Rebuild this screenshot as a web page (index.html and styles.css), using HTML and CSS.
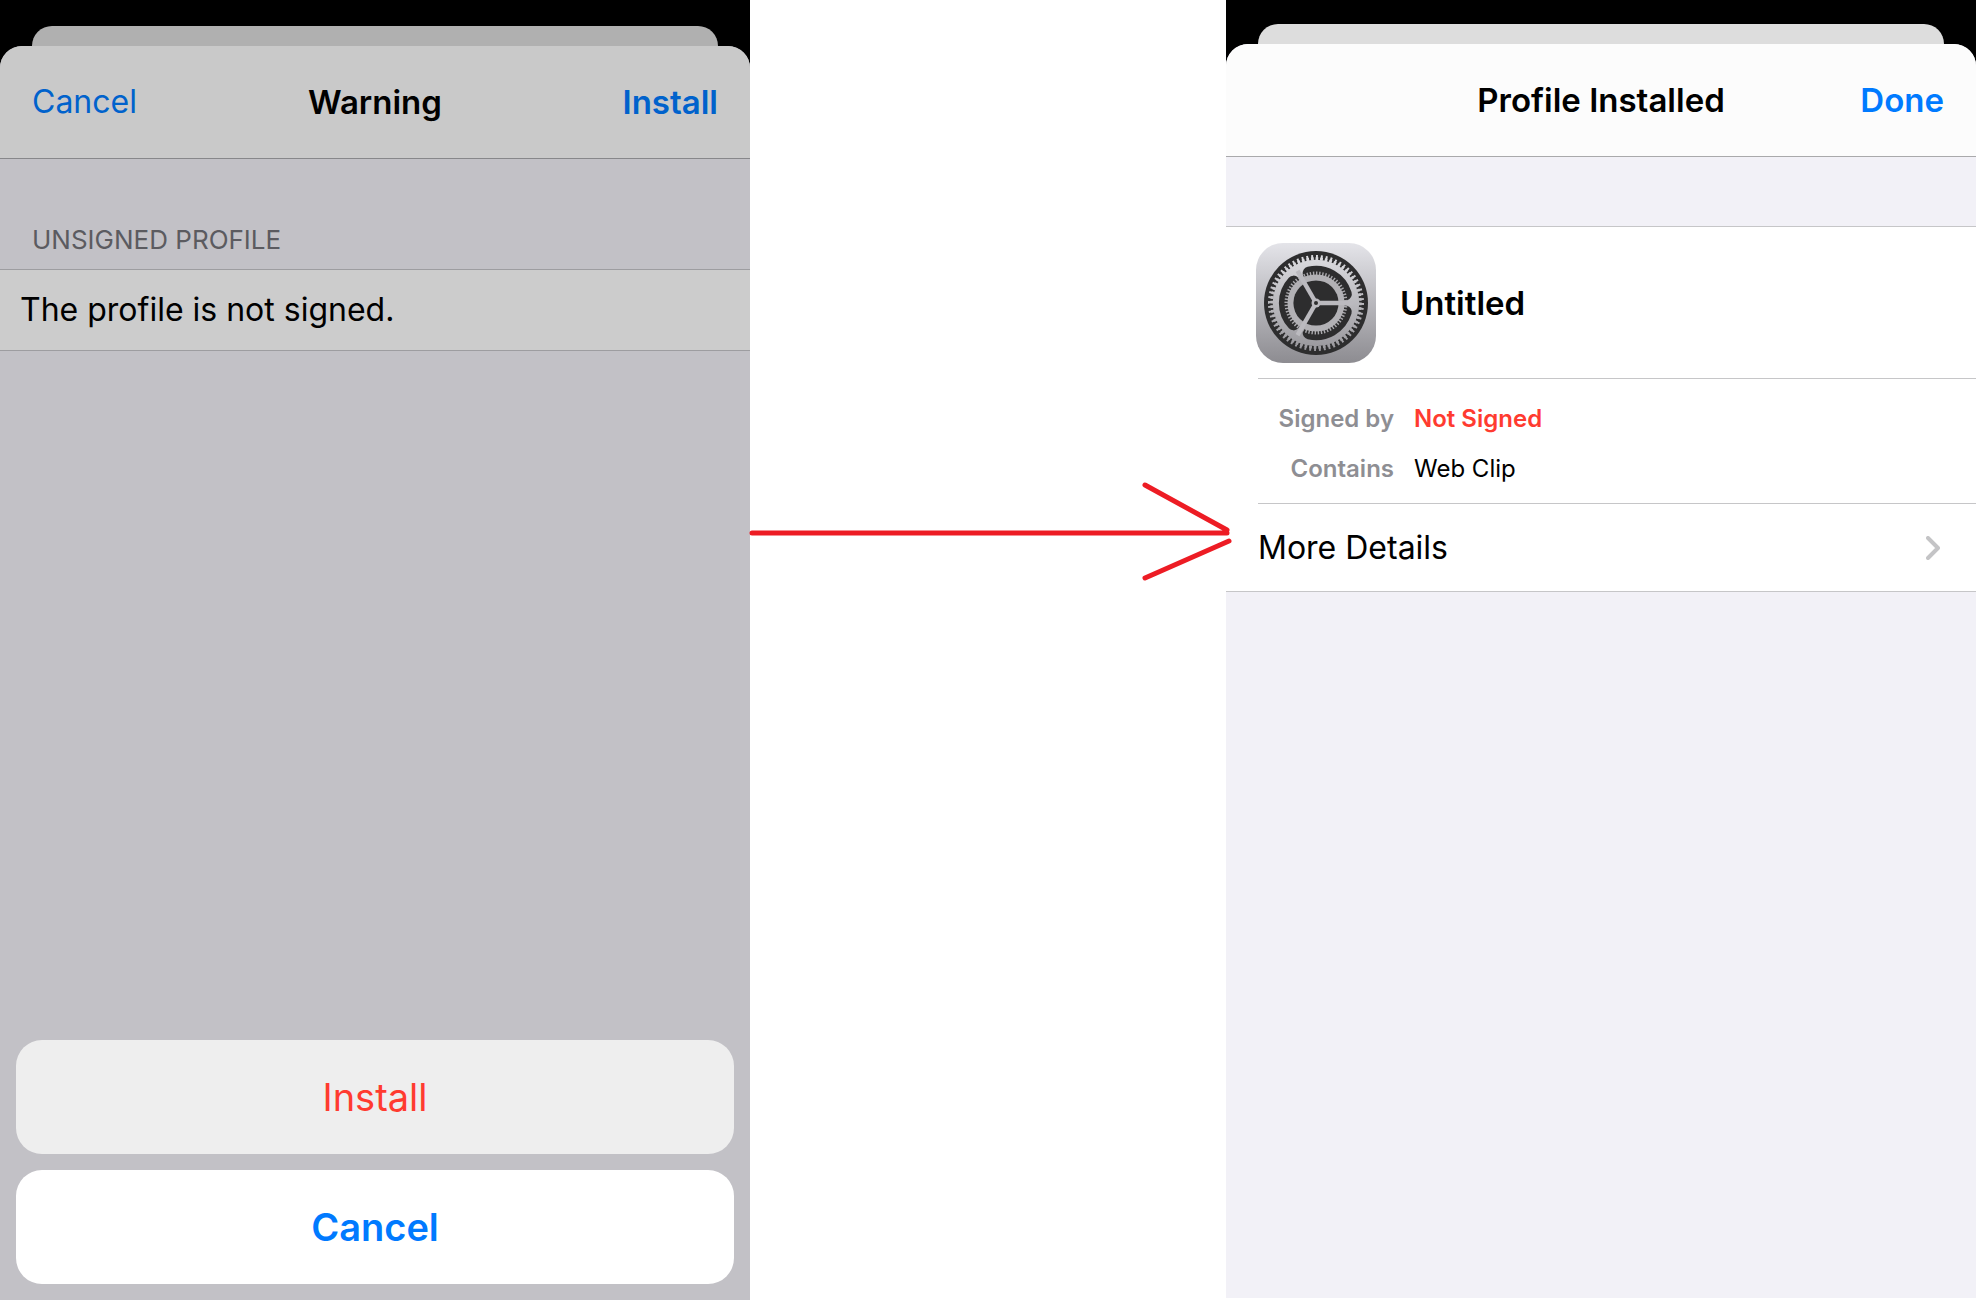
FILE: index.html
```html
<!DOCTYPE html>
<html lang="en">
<head>
    <meta charset="UTF-8">
    <meta name="viewport" content="width=device-width, initial-scale=1.0">
    <title>Install Profile</title>
    <link rel="stylesheet" href="styles.css">
</head>
<body>
    <main class="steps">
        <!-- Step 1: warning -->
        <section class="phone phone-dimmed">
            <div class="back-card"></div>
            <div class="sheet">
                <header class="navbar">
                    <button type="button" class="nav-button nav-left">Cancel</button>
                    <h1>Warning</h1>
                    <button type="button" class="nav-button nav-right strong">Install</button>
                </header>
                <h2 class="section-label">UNSIGNED PROFILE</h2>
                <p class="message">The profile is not signed.</p>
                <div class="action-sheet">
                    <button type="button" class="action destructive">Install</button>
                    <button type="button" class="action cancel">Cancel</button>
                </div>
            </div>
        </section>

        <svg class="arrow" viewBox="0 0 480 100" aria-hidden="true">
            <path d="M2 53H477M395 5L477 50M395 98L479 61"/>
        </svg>

        <!-- Step 2: installed -->
        <section class="phone phone-done">
            <div class="back-card"></div>
            <div class="sheet">
                <header class="navbar">
                    <h1>Profile Installed</h1>
                    <button type="button" class="nav-button nav-right strong">Done</button>
                </header>
                <div class="profile">
                    <div class="profile-head">
                        <svg class="gear" viewBox="0 0 120 120" aria-hidden="true">
                            <defs>
                                <linearGradient id="plate" x1="0" y1="0" x2="0" y2="1">
                                    <stop offset="0" stop-color="#e4e4e9"/>
                                    <stop offset="1" stop-color="#8d8c91"/>
                                </linearGradient>
                                <linearGradient id="metal" gradientUnits="userSpaceOnUse" x1="0" y1="-48" x2="0" y2="48">
                                    <stop offset="0" stop-color="#dcdce0"/>
                                    <stop offset="1" stop-color="#98979c"/>
                                </linearGradient>
                            </defs>
                            <rect width="120" height="120" rx="27" fill="url(#plate)"/>
                            <g transform="translate(60 60)" fill="none">
                                <circle r="52" fill="#2d2d2e"/>
                                <!-- outer wheel -->
                                <circle r="45.5" stroke="url(#metal)" stroke-width="5" pathLength="120" stroke-dasharray="0.8 1.2"/>
                                <circle r="44.2" stroke="url(#metal)" stroke-width="3" pathLength="120" stroke-dasharray="1.2 0.8" stroke-dashoffset="0.2"/>
                                <circle r="43.3" fill="url(#metal)"/>
                                <!-- slots between the spokes -->
                                <g stroke="#2d2d2e" stroke-width="13" stroke-linecap="round">
                                    <path d="M29.3 -9A30.6 30.6 0 0 0 -6.9 -29.8"/>
                                    <path d="M29.3 -9A30.6 30.6 0 0 0 -6.9 -29.8" transform="rotate(-120)"/>
                                    <path d="M29.3 -9A30.6 30.6 0 0 0 -6.9 -29.8" transform="rotate(120)"/>
                                </g>
                                <!-- inner wheel -->
                                <circle r="29.5" stroke="#aaa9ad" stroke-width="4" pathLength="120" stroke-dasharray="0.9 1.1"/>
                                <circle r="25.5" stroke="#b2b1b5" stroke-width="6"/>
                                <circle r="22.6" fill="#2d2d2e"/>
                                <g stroke="#bbbabf" stroke-width="4.4">
                                    <path d="M0 0H37"/>
                                    <path d="M0 0H37" transform="rotate(120)"/>
                                    <path d="M0 0H37" transform="rotate(-120)"/>
                                </g>
                                <circle r="4.5" fill="#bbbabf"/>
                                <circle r="2" fill="#2d2d2e"/>
                            </g>
                        </svg>
                        <h2>Untitled</h2>
                    </div>
                    <dl class="facts">
                        <dt>Signed by</dt>
                        <dd class="not-signed">Not Signed</dd>
                        <dt>Contains</dt>
                        <dd>Web Clip</dd>
                    </dl>
                    <a href="#" class="more">
                        More Details
                        <svg class="chevron" viewBox="0 0 14 24" aria-hidden="true">
                            <path d="M2 2L12 12L2 22"/>
                        </svg>
                    </a>
                </div>
            </div>
        </section>
    </main>
</body>
</html>
```
FILE: styles.css
```css
* {
    box-sizing: border-box;
}

body {
    margin: 0;
    background: #fff;
    color: #000;
    font-family: Inter, Roboto, sans-serif;
    font-size: 32px;
    line-height: 40px;
}

h1, h2, p, dl, dd {
    margin: 0;
}

h1, h2, .strong {
    font-size: 33px;
    font-weight: 600;
}

button {
    border: none;
    padding: 0;
    background: none;
    font: inherit;
    cursor: pointer;
}

.steps {
    display: grid;
    grid-template-columns: 750fr 476fr 750fr;
    min-height: 100vh;
    padding-right: 2px;
}

.phone {
    display: flex;
    flex-direction: column;
    background: #000;
}

.phone-dimmed {
    padding-top: 26px;
}

.phone-done {
    padding-top: 24px;
    margin-bottom: 2px;
}

/* edge of the card behind the sheet */
.back-card {
    height: 20px;
    margin: 0 32px;
    border-radius: 20px 20px 0 0;
    background: #ddd;
}

.sheet {
    flex: 1;
    display: flex;
    flex-direction: column;
    border-radius: 22px 22px 0 0;
    background: #f2f1f7;
    overflow: hidden;
}

.navbar {
    display: grid;
    grid-template-columns: 1fr auto 1fr;
    align-items: center;
    height: 113px;
    padding: 0 32px;
    border-bottom: 1px solid #a9a9ab;
    background: #fcfcfc;
}

.navbar h1 {
    grid-column: 2;
}

.nav-button {
    color: #007aff;
}

.nav-left {
    justify-self: start;
}

.nav-right {
    justify-self: end;
}

/* warning screen */
.phone-dimmed .back-card {
    background: #b0b0b0;
}

.phone-dimmed .sheet {
    background: #c2c1c6;
}

.phone-dimmed .navbar {
    background: #c9c9c9;
    border-color: #87878a;
}

.phone-dimmed .nav-button {
    color: #0062cc;
}

.section-label {
    padding: 61px 32px 9px;
    color: #5b5b60;
    font-size: 26px;
    font-weight: 400;
}

.message {
    padding: 20px;
    border: solid #9d9da0;
    border-width: 1px 0;
    background: #ccc;
}

.action-sheet {
    display: grid;
    gap: 16px;
    margin-top: auto;
    padding: 16px;
}

.action {
    height: 114px;
    border-radius: 26px;
    font-size: 38px;
}

.destructive {
    background: #eee;
    color: #ff3b30;
}

.cancel {
    background: #fff;
    color: #007aff;
    font-weight: 600;
}

.arrow {
    z-index: 1;
    margin: 480px -4px 0 0;
    overflow: visible;
    fill: none;
    stroke: #ed1c24;
    stroke-width: 5;
    stroke-linecap: round;
}

/* installed screen */
.profile {
    margin-top: 69px;
    padding-left: 32px;
    border: solid #c6c6c8;
    border-width: 1px 0;
    background: #fff;
}

.profile-head {
    display: flex;
    align-items: center;
    gap: 24px;
    height: 151px;
    margin-left: -2px;
}

.gear {
    width: 120px;
    height: 120px;
}

.facts {
    display: grid;
    grid-template-columns: 136px 1fr;
    column-gap: 20px;
    padding: 15px 0 9px;
    border: solid #c6c6c8;
    border-width: 1px 0;
    font-size: 24px;
    line-height: 50px;
}

.facts dt {
    color: #8e8e93;
    font-weight: 600;
    text-align: right;
}

.facts .not-signed {
    color: #ff3b30;
    font-weight: 600;
}

.more {
    display: flex;
    align-items: center;
    justify-content: space-between;
    height: 87px;
    padding-right: 36px;
    color: inherit;
    text-decoration: none;
}

.chevron {
    width: 14px;
    height: 24px;
    fill: none;
    stroke: #c4c4c6;
    stroke-width: 4;
    stroke-linecap: round;
    stroke-linejoin: round;
}
```
